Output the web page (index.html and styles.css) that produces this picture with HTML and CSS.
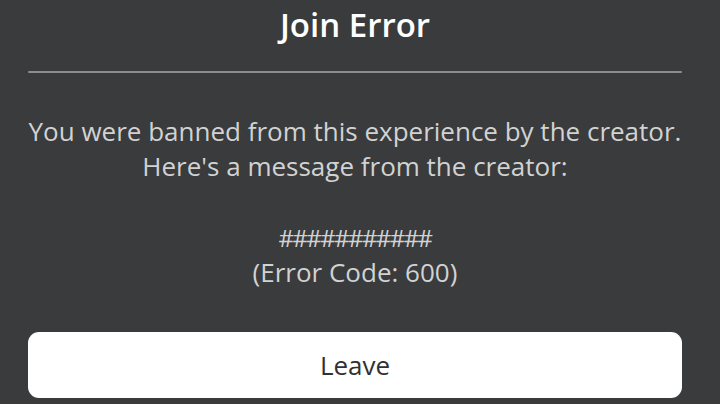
FILE: index.html
```html
<!DOCTYPE html>
<html lang="en">
<head>
    <meta charset="UTF-8">
    <meta name="viewport" content="width=device-width, initial-scale=1.0">
    <title>Join Error</title>
    <link rel="stylesheet" href="styles.css">
</head>
<body>
    <div class="dialog">
        <h1 class="title">Join Error</h1>
        <div class="divider"></div>
        <p class="message">You were banned from this experience by the creator.<br>Here's a message from the creator:</p>
        <p class="detail"><span class="hashes">###########</span><br>(Error Code: 600)</p>
        <button class="leave-btn" type="button">Leave</button>
    </div>
</body>
</html>
```
FILE: styles.css
```css
body {
    margin: 0;
    background: #393b3d;
    font-family: "Open Sans", "Noto Sans", sans-serif;
}
.dialog {
    width: 720px;
    height: 404px;
    padding: 0 38px 0 28px;
    box-sizing: border-box;
    display: flex;
    flex-direction: column;
    align-items: stretch;
}
.title {
    margin: 0;
    padding-top: 5px;
    font-size: 33px;
    font-weight: 600;
    color: #ffffff;
    text-align: center;
    line-height: 40px;
}
.divider {
    height: 2px;
    background: #8c8d8e;
    border-radius: 1px;
    margin-top: 26px;
}
.message {
    margin: 41px -10px 0;
    font-size: 26px;
    line-height: 35px;
    color: #d2d2d2;
    text-align: center;
    white-space: nowrap;
}
.detail {
    margin: 36px 0 0;
    font-size: 26px;
    line-height: 35px;
    color: #d2d2d2;
    text-align: center;
}
.hashes {
    font-size: 24px;
    letter-spacing: -1.6px;
}
.leave-btn {
    margin-top: auto;
    margin-bottom: 6px;
    height: 66px;
    padding: 0;
    border: none;
    border-radius: 11px;
    background: #ffffff;
    color: #2f3133;
    font-family: inherit;
    font-size: 26px;
}
```
